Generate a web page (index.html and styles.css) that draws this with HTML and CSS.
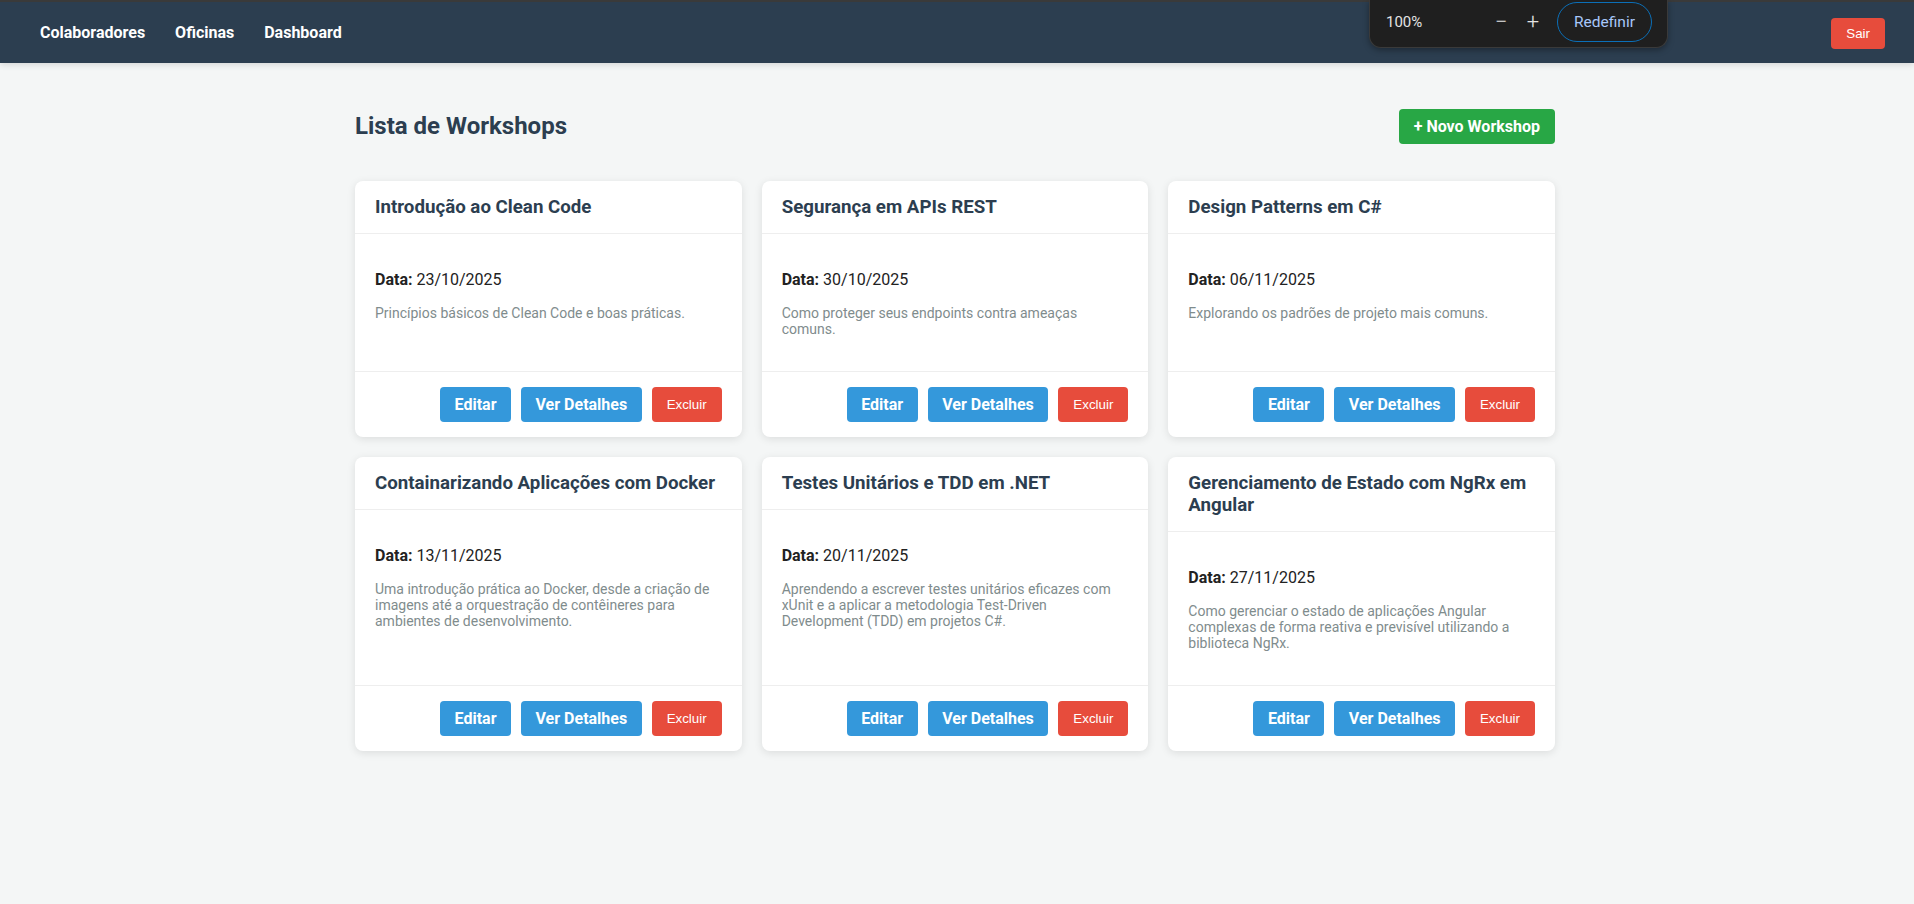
FILE: index.html
```html
<!DOCTYPE html>
<html lang="pt-BR">
<head>
<meta charset="utf-8">
<title>Lista de Workshops</title>
<link rel="stylesheet" href="styles.css">
</head>
<body>
<nav class="navbar">
  <div class="nav-links">
    <a href="#">Colaboradores</a>
    <a href="#">Oficinas</a>
    <a href="#">Dashboard</a>
  </div>
  <button class="btn-logout">Sair</button>
</nav>

<div class="zoom-bubble">
  <span class="zoom-value">100%</span>
  <span class="zoom-btn">&minus;</span>
  <span class="zoom-btn">+</span>
  <span class="zoom-reset">Redefinir</span>
</div>

<main class="container">
  <div class="page-header">
    <h2>Lista de Workshops</h2>
    <button class="btn btn-success">+ Novo Workshop</button>
  </div>

  <div class="grid">
    <div class="card">
      <div class="card-header"><h3>Introdução ao Clean Code</h3></div>
      <div class="card-body">
        <p class="date"><strong>Data:</strong> 23/10/2025</p>
        <p class="desc">Princípios básicos de Clean Code e boas práticas.</p>
      </div>
      <div class="card-footer">
        <button class="btn btn-primary">Editar</button>
        <button class="btn btn-primary">Ver Detalhes</button>
        <button class="btn-danger">Excluir</button>
      </div>
    </div>

    <div class="card">
      <div class="card-header"><h3>Segurança em APIs REST</h3></div>
      <div class="card-body">
        <p class="date"><strong>Data:</strong> 30/10/2025</p>
        <p class="desc">Como proteger seus endpoints contra ameaças comuns.</p>
      </div>
      <div class="card-footer">
        <button class="btn btn-primary">Editar</button>
        <button class="btn btn-primary">Ver Detalhes</button>
        <button class="btn-danger">Excluir</button>
      </div>
    </div>

    <div class="card">
      <div class="card-header"><h3>Design Patterns em C#</h3></div>
      <div class="card-body">
        <p class="date"><strong>Data:</strong> 06/11/2025</p>
        <p class="desc">Explorando os padrões de projeto mais comuns.</p>
      </div>
      <div class="card-footer">
        <button class="btn btn-primary">Editar</button>
        <button class="btn btn-primary">Ver Detalhes</button>
        <button class="btn-danger">Excluir</button>
      </div>
    </div>

    <div class="card">
      <div class="card-header"><h3>Containarizando Aplicações com Docker</h3></div>
      <div class="card-body">
        <p class="date"><strong>Data:</strong> 13/11/2025</p>
        <p class="desc">Uma introdução prática ao Docker, desde a criação de imagens até a orquestração de contêineres para ambientes de desenvolvimento.</p>
      </div>
      <div class="card-footer">
        <button class="btn btn-primary">Editar</button>
        <button class="btn btn-primary">Ver Detalhes</button>
        <button class="btn-danger">Excluir</button>
      </div>
    </div>

    <div class="card">
      <div class="card-header"><h3>Testes Unitários e TDD em .NET</h3></div>
      <div class="card-body">
        <p class="date"><strong>Data:</strong> 20/11/2025</p>
        <p class="desc">Aprendendo a escrever testes unitários eficazes com xUnit e a aplicar a metodologia Test-Driven Development (TDD) em projetos C#.</p>
      </div>
      <div class="card-footer">
        <button class="btn btn-primary">Editar</button>
        <button class="btn btn-primary">Ver Detalhes</button>
        <button class="btn-danger">Excluir</button>
      </div>
    </div>

    <div class="card">
      <div class="card-header"><h3>Gerenciamento de Estado com NgRx em Angular</h3></div>
      <div class="card-body">
        <p class="date"><strong>Data:</strong> 27/11/2025</p>
        <p class="desc">Como gerenciar o estado de aplicações Angular complexas de forma reativa e previsível utilizando a biblioteca NgRx.</p>
      </div>
      <div class="card-footer">
        <button class="btn btn-primary">Editar</button>
        <button class="btn btn-primary">Ver Detalhes</button>
        <button class="btn-danger">Excluir</button>
      </div>
    </div>
  </div>
</main>
</body>
</html>
```

FILE: styles.css
```css
* {
  box-sizing: border-box;
}

html, body {
  margin: 0;
  padding: 0;
}

body {
  font-family: Roboto, "Liberation Sans", Arial, sans-serif;
  background: #f4f6f6;
  color: #333;
  min-height: 904px;
}

.navbar {
  height: 63px;
  background: #2c3e50;
  border-top: 2px solid #3a3a3a;
  display: flex;
  align-items: center;
  justify-content: space-between;
  padding: 0 29px 0 40px;
  box-shadow: 0 2px 6px rgba(0, 0, 0, 0.12);
}

.nav-links {
  display: flex;
  gap: 30px;
}

.nav-links a {
  color: #fff;
  text-decoration: none;
  font-weight: 700;
  font-size: 16px;
}

.btn-logout {
  background: #e74c3c;
  color: #fff;
  border: none;
  border-radius: 4px;
  padding: 8px 15px;
  font-family: "Liberation Sans", Arial, sans-serif;
  font-size: 13.33px;
  height: 31px;
  margin-top: 1px;
}

.zoom-bubble {
  position: absolute;
  top: 0;
  right: 246px;
  width: 299px;
  height: 48px;
  background: #1f1f1f;
  border: 1px solid #3a3a3a;
  border-top: none;
  border-radius: 0 0 12px 12px;
  box-shadow: 0 2px 6px rgba(0, 0, 0, 0.35);
  display: flex;
  align-items: center;
  padding: 0 15px 4px 16px;
  font-family: Roboto, "Noto Sans", sans-serif;
  font-size: 15px;
  color: #e3e3e3;
}

.zoom-value {
  flex: 1;
}

.zoom-btn {
  width: 30px;
  margin-left: 2px;
  text-align: center;
  font-size: 22px;
  color: #e3e3e3;
  font-weight: 300;
}

.zoom-reset {
  margin-left: 9px;
  width: 95px;
  height: 40px;
  display: flex;
  align-items: center;
  justify-content: center;
  border: 1px solid #0b6fb8;
  border-radius: 20px;
  color: #a8c7fa;
  font-size: 15.5px;
}

.container {
  max-width: 1200px;
  margin: 0 auto;
  padding: 29px 0 30px;
  position: relative;
  left: -2px;
}

.page-header {
  display: flex;
  align-items: center;
  justify-content: space-between;
  margin-bottom: 21px;
}

.page-header h2 {
  margin: 20px 0;
  font-size: 24px;
  font-weight: 700;
  color: #2c3e50;
}

.btn {
  border: none;
  border-radius: 4px;
  padding: 8px 14.5px;
  font-family: Roboto, "Liberation Sans", Arial, sans-serif;
  font-size: 16px;
  font-weight: 700;
  color: #fff;
  line-height: normal;
}

.btn-success {
  background: #28a745;
  padding: 8px 15px;
}

.btn-primary {
  background: #3498db;
}

.btn-danger {
  background: #e74c3c;
  color: #fff;
  border: none;
  border-radius: 4px;
  padding: 8px 15px;
  font-family: "Liberation Sans", Arial, sans-serif;
  font-size: 13.33px;
}

.grid {
  display: grid;
  grid-template-columns: repeat(3, 1fr);
  gap: 20px;
}

.card {
  background: #fff;
  border-radius: 8px;
  box-shadow: 0 2px 8px rgba(0, 0, 0, 0.1);
  display: flex;
  flex-direction: column;
}

.card-header {
  padding: 15px 20px;
  border-bottom: 1px solid #eee;
}

.card-header h3 {
  margin: 0;
  font-size: 18.72px;
  font-weight: 700;
  color: #2c3e50;
}

.card-body {
  padding: 20px;
  flex: 1;
}

.date {
  margin: 16px 0;
  font-size: 16px;
  color: #222;
}

.desc {
  margin: 14px 0;
  font-size: 14px;
  color: #7f8c8d;
}

.card-footer {
  padding: 15px 20px;
  border-top: 1px solid #eee;
  display: flex;
  justify-content: flex-end;
  gap: 10px;
}
```
